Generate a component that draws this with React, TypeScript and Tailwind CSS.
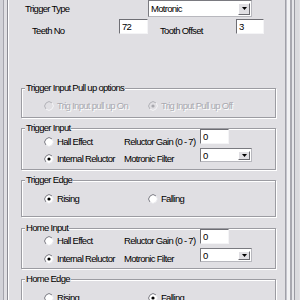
import React from 'react';

function Radio({ checked = false, disabled = false }: { checked?: boolean; disabled?: boolean }) {
  return (
    <svg width="10" height="10" viewBox="0 0 10 10" className="shrink-0 block">
      <circle cx="5" cy="5" r="4.3" fill={disabled ? '#e0dfe3' : '#ffffff'} />
      <path d="M1.96 8.04 A4.3 4.3 0 0 1 8.04 1.96" fill="none" stroke={disabled ? '#b2b2b8' : '#7c7c84'} strokeWidth="1" />
      <path d="M8.04 1.96 A4.3 4.3 0 0 1 1.96 8.04" fill="none" stroke={disabled ? '#f4f4f6' : '#e8e8ec'} strokeWidth="1" />
      {checked && <circle cx="5" cy="5" r="1.6" fill={disabled ? '#a8a8ae' : '#000000'} />}
    </svg>
  );
}

function DropBtn({ w = 12, h = 11 }: { w?: number; h?: number }) {
  return (
    <div
      className="flex items-center justify-center bg-[#e0dfe3] border border-t-white border-l-white border-r-[#6a6a70] border-b-[#6a6a70] shrink-0"
      style={{ width: w, height: h }}
    >
      <svg width="5" height="3" viewBox="0 0 5 3" className="block">
        <path d="M0 0H5L2.5 3Z" fill="#000" />
      </svg>
    </div>
  );
}

function Select({ value, w, h }: { value: string; w: number; h: number }) {
  return (
    <div
      className="flex items-center bg-white border border-t-[#7a7a80] border-l-[#7a7a80] border-r-[#b8b8be] border-b-[#b8b8be] pl-[2px] pr-[1px] shrink-0"
      style={{ width: w, height: h }}
    >
      <span className="flex-1 leading-[11px]">{value}</span>
      <DropBtn w={12} h={h - 5} />
    </div>
  );
}

function Input({ value, w, h = 15 }: { value: string; w: number; h?: number }) {
  return (
    <div
      className="bg-white border border-t-[#6e6e74] border-l-[#6e6e74] border-r-[#f4f4f6] border-b-[#f4f4f6] pl-[2px] pt-[1px] leading-[11px] shrink-0"
      style={{ width: w, height: h }}
    >
      {value}
    </div>
  );
}

function Group({ title, h, mt, children }: { title: string; h: number; mt: number; children?: React.ReactNode }) {
  return (
    <div
      className="relative border border-[#9c9ca2] shadow-[1px_1px_0_#ffffff,inset_1px_1px_0_#ffffff]"
      style={{ height: h, marginTop: mt }}
    >
      <span className="absolute -top-[7px] left-[3px] px-[1px] bg-[#e0dfe3] leading-[11px] whitespace-nowrap">{title}</span>
      {children}
    </div>
  );
}

function RadioLabel({ text, checked, disabled, w }: { text: string; checked?: boolean; disabled?: boolean; w: number }) {
  return (
    <div className="flex items-center gap-[3px] h-[11px] shrink-0" style={{ width: w }}>
      <Radio checked={checked} disabled={disabled} />
      <span
        className={
          disabled
            ? 'leading-[11px] whitespace-nowrap text-[#a9a9b0] [text-shadow:1px_1px_0_#ffffff]'
            : 'leading-[11px] whitespace-nowrap'
        }
      >
        {text}
      </span>
    </div>
  );
}

function InputGroup({ title, mt, h, r1, r2 }: { title: string; mt: number; h: number; r1: number; r2: number }) {
  return (
    <Group title={title} h={h} mt={mt}>
      <div className="flex items-start pl-[22px] h-[15px]">
        <div style={{ marginTop: r1 }}>
          <RadioLabel text="Hall Effect" w={80} />
        </div>
        <span className="w-[76px] leading-[11px] whitespace-nowrap" style={{ marginTop: r1 }}>
          Reluctor Gain (0 - 7)
        </span>
        <Input value="0" w={29} />
      </div>
      <div className="flex items-start pl-[22px] mt-[4px] h-[14px]">
        <div style={{ marginTop: r2 }}>
          <RadioLabel text="Internal Reluctor" checked w={80} />
        </div>
        <span className="w-[76px] leading-[11px] whitespace-nowrap" style={{ marginTop: r2 }}>
          Motronic Filter
        </span>
        <Select value="0" w={52} h={14} />
      </div>
    </Group>
  );
}

function EdgeGroup({ title, mt, h, pt, risingChecked }: { title: string; mt: number; h: number; pt: number; risingChecked: boolean }) {
  return (
    <Group title={title} h={h} mt={mt}>
      <div className="flex items-center pl-[22px]" style={{ paddingTop: pt }}>
        <RadioLabel text="Rising" checked={risingChecked} w={104} />
        <RadioLabel text="Falling" checked={!risingChecked} w={80} />
      </div>
    </Group>
  );
}

export default function App() {
  return (
    <div
      className="w-[300px] h-[300px] overflow-hidden flex bg-[#e0dfe3] text-black text-[9.5px] tracking-[-0.7px]"
      style={{ fontFamily: '"Liberation Sans", Arial, sans-serif' }}
    >
      {/* left frame */}
      <div className="flex h-full shrink-0">
        <div className="w-[3px] bg-[#d2d2d8]" />
        <div className="w-[1px] bg-[#a4a4ac]" />
        <div className="w-[3px] bg-[#e0dfe3]" />
        <div className="w-[1px] bg-[#8c8c94]" />
        <div className="w-[1px] bg-white" />
        <div className="w-[1px] bg-[#e0dfe3]" />
      </div>

      {/* content */}
      <div className="w-[275px] shrink-0 flex flex-col">
        <div className="flex items-center h-[17px]">
          <span className="pl-[15px] w-[138px] leading-[11px] shrink-0">Trigger Type</span>
          <Select value="Motronic" w={104} h={17} />
        </div>
        <div className="flex items-start mt-[2px] h-[15px]">
          <span className="pl-[22px] w-[109px] mt-[6px] leading-[11px] shrink-0">Teeth No</span>
          <Input value="72" w={29} />
          <span className="ml-[12px] w-[76px] mt-[6px] leading-[11px] shrink-0">Tooth Offset</span>
          <Input value="3" w={28} />
        </div>

        <div className="pl-[11px] pr-[9px] mt-[54px] flex flex-col">
          <Group title="Trigger Input Pull up options" h={30} mt={0}>
            <div className="flex items-center pl-[22px] pt-[11px]">
              <RadioLabel text="Trig Input pull up On" disabled w={104} />
              <RadioLabel text="Trig Input Pull up Off" disabled checked w={110} />
            </div>
          </Group>

          <InputGroup title="Trigger Input" mt={10} h={42} r1={7} r2={5} />
          <EdgeGroup title="Trigger Edge" mt={10} h={37} pt={12} risingChecked={true} />
          <InputGroup title="Home Input" mt={11} h={41} r1={6} r2={5} />
          <EdgeGroup title="Home Edge" mt={10} h={37} pt={12} risingChecked={false} />
        </div>
      </div>

      {/* right frame */}
      <div className="flex h-full shrink-0">
        <div className="w-[1px] bg-[#a0a0a8]" />
        <div className="w-[1px] bg-[#c4c4cc]" />
        <div className="w-[3px] bg-[#f2f2f4]" />
        <div className="w-[2px] bg-[#a8a8b0]" />
        <div className="w-[2px] bg-[#e6e6ea]" />
        <div className="w-[1px] bg-[#9a9aa2]" />
        <div className="w-[4px] bg-[#dadade]" />
      </div>
    </div>
  );
}
